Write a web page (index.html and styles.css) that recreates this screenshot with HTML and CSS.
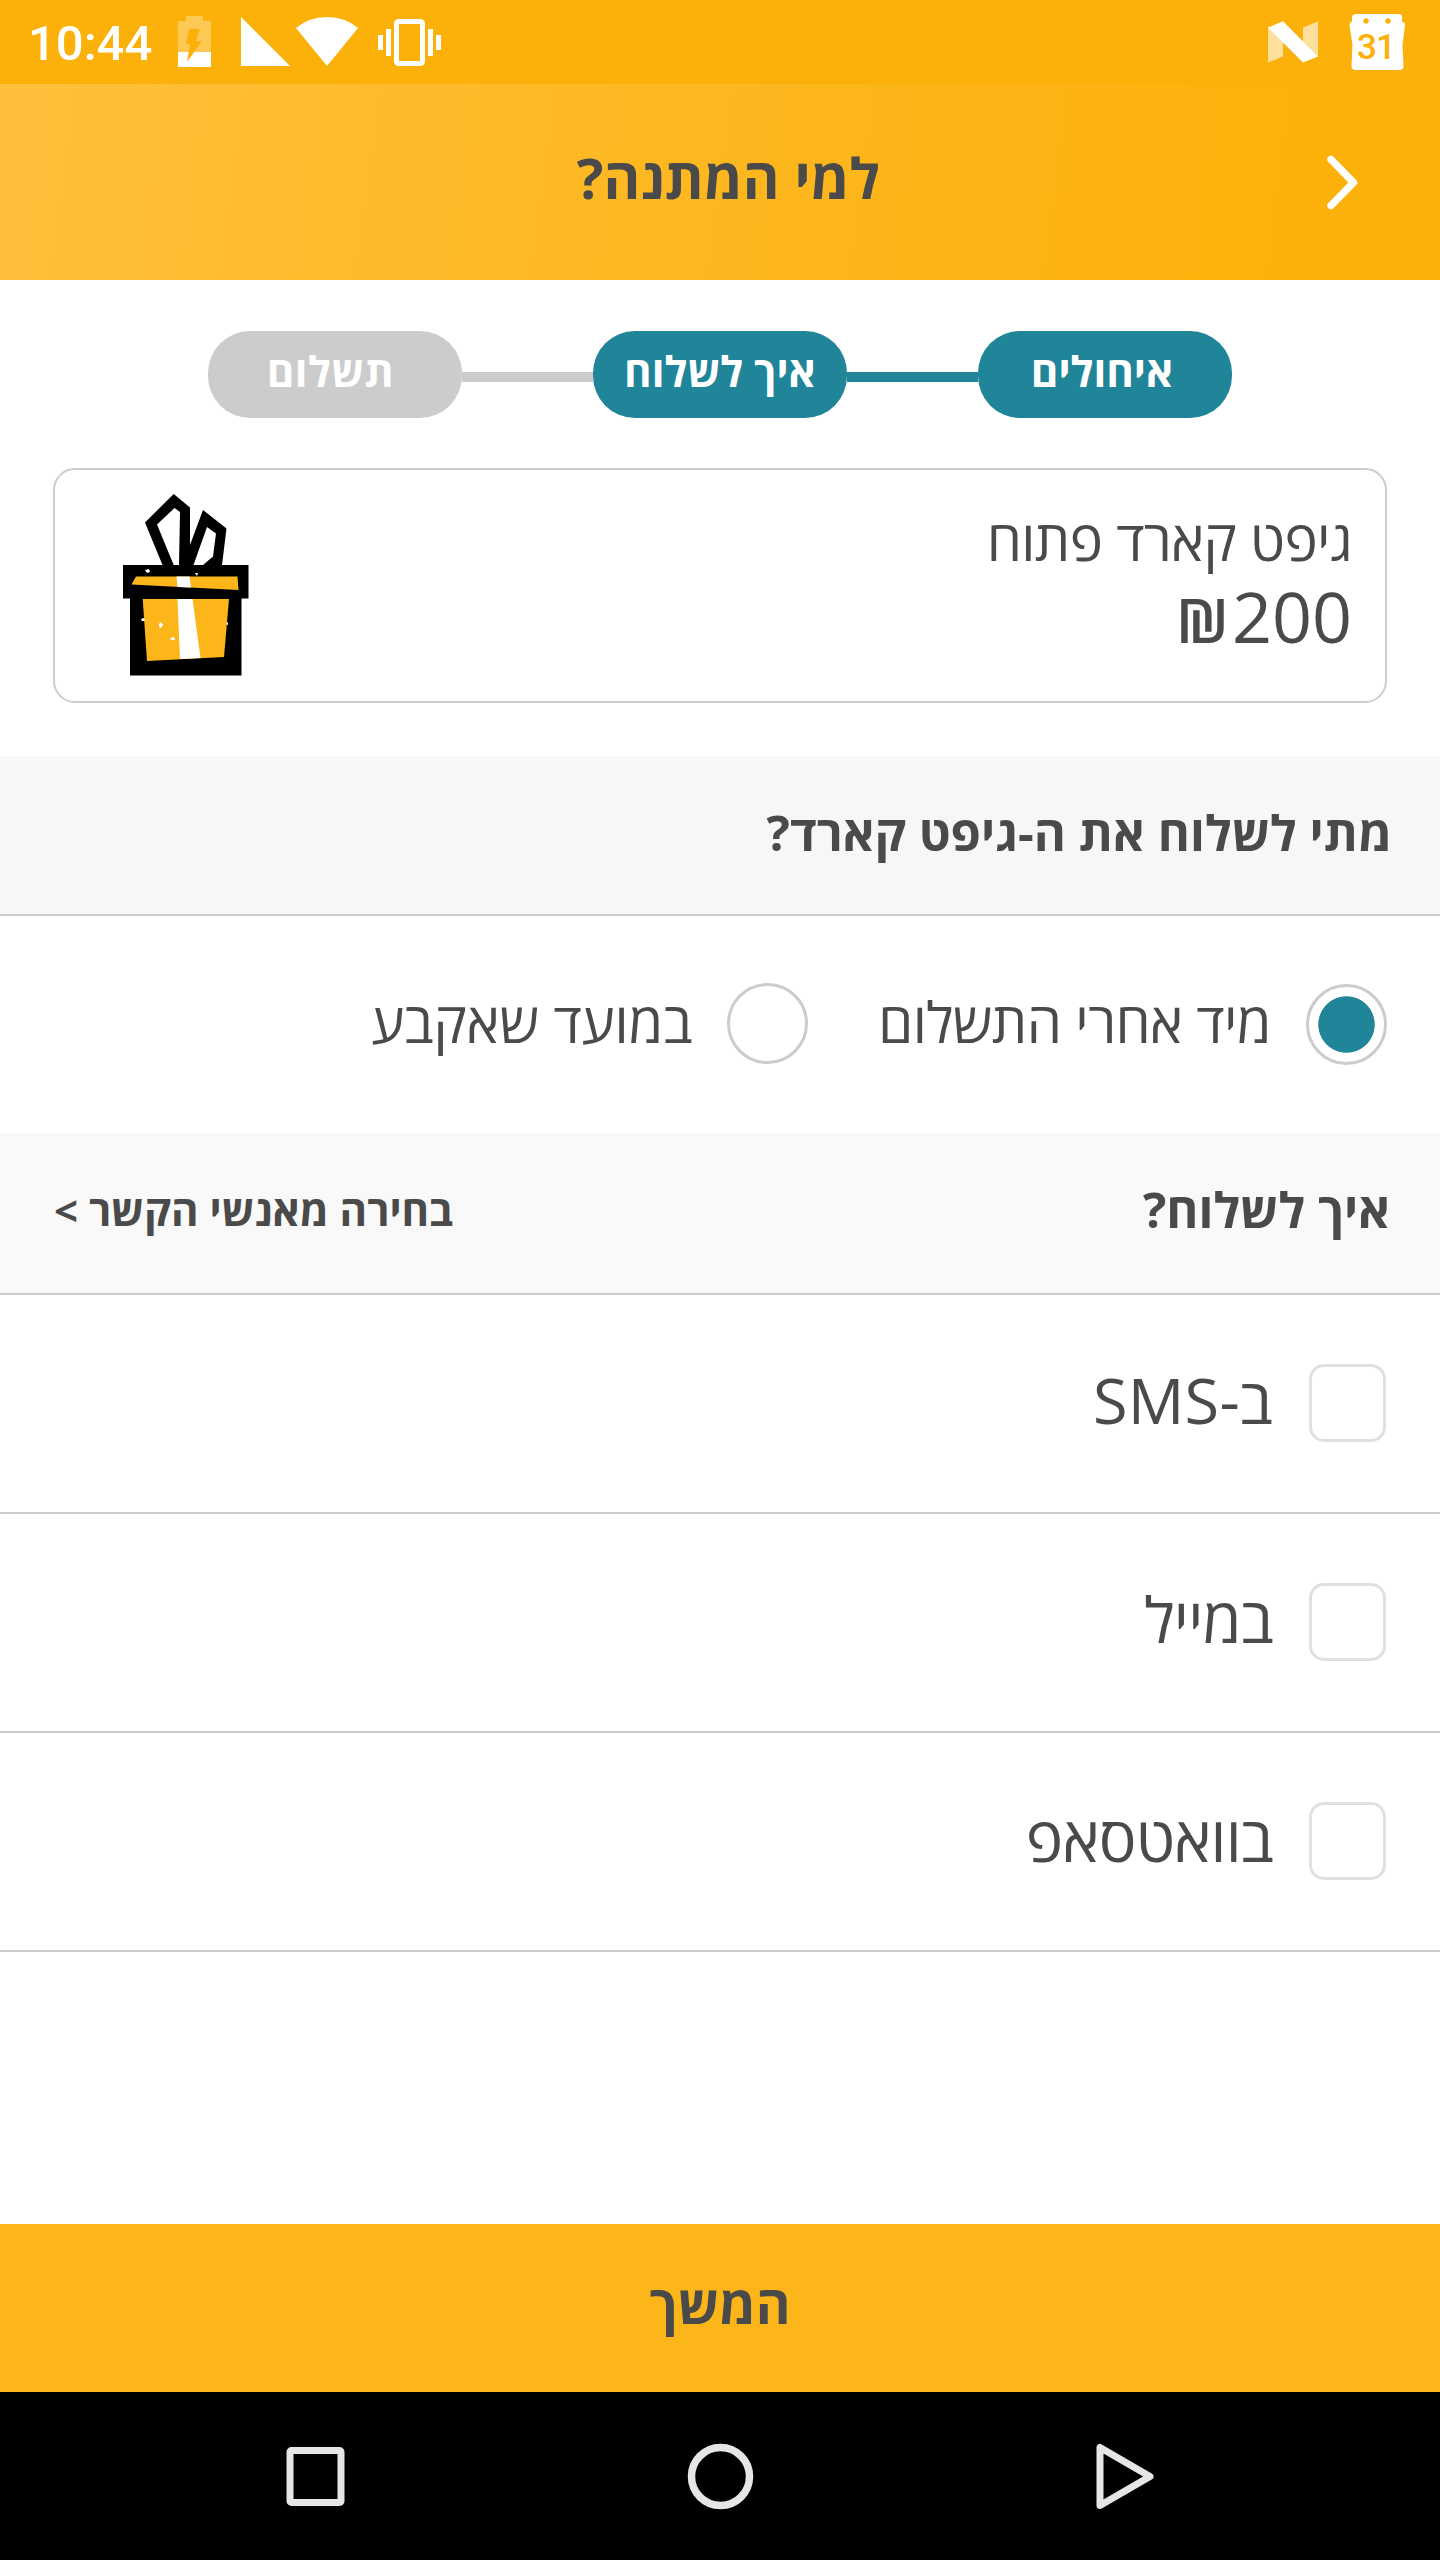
FILE: index.html
```html
<!DOCTYPE html>
<html lang="he" dir="rtl">
<head>
<meta charset="utf-8">
<title>למי המתנה?</title>
<link rel="stylesheet" href="styles.css">
</head>
<body>
<div class="status-bar" dir="ltr">
  <span class="clock">10:44</span>
  <svg class="status-icons" width="290" height="84" viewBox="160 0 290 84">
    <path fill="#fff" fill-opacity=".3" d="M186 16h17v5h8v31h-33V21h8z"/>
    <path fill="#fff" d="M178 52h33v15h-33z"/>
    <path fill="#fcb10a" d="M189 29h11l-4 12h6l-15 21 3-18h-4z"/>
    <path fill="#fff" d="M241 17v49h49z"/>
    <path fill="#fff" d="M296 28Q309 17 327 17T358 28L327 66z"/>
    <rect x="396.500" y="21.500" width="26" height="42" rx="2" fill="none" stroke="#fff" stroke-width="5"/>
    <path fill="#fff" d="M378 35h5v15h-5zM386 29h5v27h-5zM428 29h5v27h-5zM436 35h5v15h-5z"/>
  </svg>
  <svg class="notification-icons" width="150" height="84" viewBox="1260 0 150 84">
    <path fill="#fff" fill-opacity=".6" d="M1268 27.500L1283 33v23.500L1268 62.500zM1318 21.500V57L1303 45V27.500z"/>
    <path fill="#fff" d="M1268 27.500L1283 21.300 1318 56.500 1303 62.500z"/>
    <path fill="#fff" d="M1356 14h43q3 0 3 3v5q3 0 3 3l-2.500 20 1 21q0 4-4 4h-44q-4 0-4-4l1-21-3-20q0-3 2.500-3v-4q0-4 4-4z"/>
    <circle cx="1366" cy="21" r="2.700" fill="#fcb10a"/>
    <circle cx="1388" cy="21" r="2.700" fill="#fcb10a"/>
    <text class="date" x="1376" y="59" text-anchor="middle">31</text>
  </svg>
</div>

<header class="header">
  <h1 class="title">למי המתנה?</h1>
  <svg class="back" width="36" height="60" viewBox="1324 152 36 60">
    <path d="M1331 159.500l22.500 23-22.500 23" fill="none" stroke="#fff" stroke-width="7.500" stroke-linecap="round" stroke-linejoin="round"/>
  </svg>
</header>

<main class="content">
  <div class="steps">
    <span class="step side">איחולים</span>
    <span class="link-line"></span>
    <span class="step">איך לשלוח</span>
    <span class="link-line pending"></span>
    <span class="step side pending">תשלום</span>
  </div>

  <section class="card">
    <div class="card-text">
      <div class="card-name">גיפט קארד פתוח</div>
      <div class="card-price"><span class="currency">₪</span>200</div>
    </div>
    <svg class="gift" width="126" height="182" viewBox="123 494 126 182">
      <path d="M173.700 494L190 507.500V545L203 510 226.500 528.500 222 565H248.500V598.500H241.500V675.500H130V598.500H123V565H162.500L145 522.500z"/>
      <path fill="#fff" d="M174.500 508L180 512 179 565H173.700L157 524.500zM207 527L216 533.500 213 556.500 203 565H193.500z"/>
      <path fill="#fcb61a" d="M136 576.500H237.500L238.500 590 131.500 584.500zM142.700 599H229L224 657 147 661z"/>
      <path fill="#fff" d="M176.500 576.500H189.500L191 587.500 177.500 587zM177.500 599H192.500L200.500 658 180 659z"/>
      <path fill="#fff" d="M145 570l4-1 1 3-3 1zM195 573l3 0-1 3zM141 619l3-1 1 3-3 0zM159 624l2-2 2 3-2 3-2-1zM170 638l4-1 1 3-4 0zM226 624l2-2v3z"/>
    </svg>
  </section>

  <h2 class="section-head"><span>מתי לשלוח את ה-גיפט קארד?</span></h2>
  <div class="radio-row">
    <span class="radio checked"></span>
    <span class="radio-label first">מיד אחרי התשלום</span>
    <span class="radio second"></span>
    <span class="radio-label last">במועד שאקבע</span>
  </div>

  <h2 class="section-head how"><span>איך לשלוח?</span><span class="contacts">בחירה מאנשי הקשר &gt;</span></h2>
  <div class="option"><span class="checkbox"></span><span class="option-label latin">ב-SMS</span></div>
  <div class="option"><span class="checkbox"></span><span class="option-label">במייל</span></div>
  <div class="option"><span class="checkbox"></span><span class="option-label">בוואטסאפ</span></div>
</main>

<div class="continue"><span>המשך</span></div>

<nav class="nav-bar" dir="ltr">
  <svg width="1440" height="168" viewBox="0 2392 1440 168" fill="none" stroke="#e6e6e6">
    <rect x="290" y="2450.500" width="51" height="52" rx="1.500" stroke-width="7"/>
    <circle cx="720.500" cy="2476.500" r="29" stroke-width="7.500"/>
    <path d="M1100 2447.500V2505.500L1150 2476.500z" stroke-width="7" stroke-linejoin="round"/>
  </svg>
</nav>
</body>
</html>
```
FILE: styles.css
```css
* { box-sizing: border-box; }

body {
  margin: 0;
  width: 1440px;
  height: 2560px;
  display: flex;
  flex-direction: column;
  background: #fff;
  color: #4a4a4a;
  font-family: "Open Sans", sans-serif;
}

svg { display: block; flex: none; }
h1, h2 { margin: 0; font-weight: 700; }

.status-bar {
  height: 84px;
  flex: none;
  display: flex;
  align-items: center;
  background: #fcb10a;
}
.clock {
  width: 160px;
  padding-top: 3px;
  padding-left: 28px;
  color: #fff;
  font: 500 49px/84px Roboto, sans-serif;
}
.notification-icons { margin-left: auto; margin-right: 30px; }
.date { font: 500 35px Roboto, sans-serif; letter-spacing: -1px; fill: #fcb10a; }

.header {
  height: 196px;
  flex: none;
  display: grid;
  grid-template-columns: 116px 1fr 116px;
  align-items: center;
  background: linear-gradient(98deg, #ffc03c 0%, #fdb71f 50%, #fcb10a 90%);
}
.title {
  grid-column: 2;
  grid-row: 1;
  padding-bottom: 10px;
  padding-left: 17px;
  text-align: center;
  font-size: 56px;
  line-height: 76px;
  letter-spacing: 0.15px;
}
.back { grid-column: 1; grid-row: 1; margin-right: 80px; }

.content { flex: 1; min-height: 0; }

.steps {
  display: flex;
  justify-content: center;
  align-items: center;
  padding-top: 51px;
  height: 138px;
}
.step {
  width: 254px;
  height: 87px;
  border-radius: 42px;
  background: #208599;
  color: #fff;
  font-weight: 700;
  font-size: 42px;
  line-height: 80px;
  text-align: center;
}
.step.side { padding-right: 6px; }
.step.side.pending { padding-right: 9px; letter-spacing: 0.4px; }
.step.pending, .link-line.pending { background: #ccc; }
.link-line { width: 131px; height: 10px; margin-top: 5px; background: #208599; }

.card {
  height: 235px;
  margin: 50px 53px 53px;
  padding: 0 33px 0 68px;
  display: flex;
  justify-content: space-between;
  border: 2px solid #ccc;
  border-radius: 22px;
}
.card-text { padding-top: 34px; }
.card-name { font-size: 56px; line-height: 71px; letter-spacing: -0.63px; }
.card-price { font-size: 70px; line-height: 82px; }
.currency { margin-right: 3px; font-size: 62px; font-weight: 600; line-height: 1; }
.gift { margin-top: 24px; }

.section-head {
  height: 160px;
  padding: 0 48px 6px 54px;
  display: flex;
  align-items: center;
  justify-content: space-between;
  background: #f7f7f7;
  border-bottom: 2px solid #ccc;
  font-size: 49px;
  letter-spacing: 0.04px;
}
.section-head.how { height: 162px; padding-right: 50px; padding-bottom: 8px; background: #f9f9f9; letter-spacing: 0; }
.contacts { font-size: 42px; }

.radio-row {
  height: 217px;
  padding-right: 53px;
  display: flex;
  align-items: center;
}
.radio {
  width: 81px;
  height: 81px;
  border: 3px solid #ccc;
  border-radius: 50%;
}
.radio.checked { background: radial-gradient(circle, #208599 27.800px, #fff 28.600px); }
.radio.second { margin-bottom: 2px; }
.radio-label { padding-bottom: 7px; padding-right: 35px; font-size: 56px; letter-spacing: -0.6px; }
.radio-label.first { padding-left: 70px; }
.radio-label.last { letter-spacing: -0.1px; }

.option {
  height: 219px;
  padding-right: 54px;
  display: flex;
  align-items: center;
  border-bottom: 2px solid #ccc;
}
.checkbox {
  width: 77px;
  height: 78px;
  margin-bottom: 2px;
  border: 3px solid #e0e0e0;
  border-radius: 15px;
}
.option-label {
  padding-right: 36px;
  padding-bottom: 8px;
  font-size: 63px;
  letter-spacing: -0.8px;
}
.option-label.latin { letter-spacing: 0.2px; }

.continue {
  height: 168px;
  flex: none;
  padding-bottom: 9px;
  display: flex;
  align-items: center;
  justify-content: center;
  background: #fcb61a;
  font-weight: 700;
  font-size: 53px;
}
.nav-bar { height: 168px; flex: none; background: #000; }
```
